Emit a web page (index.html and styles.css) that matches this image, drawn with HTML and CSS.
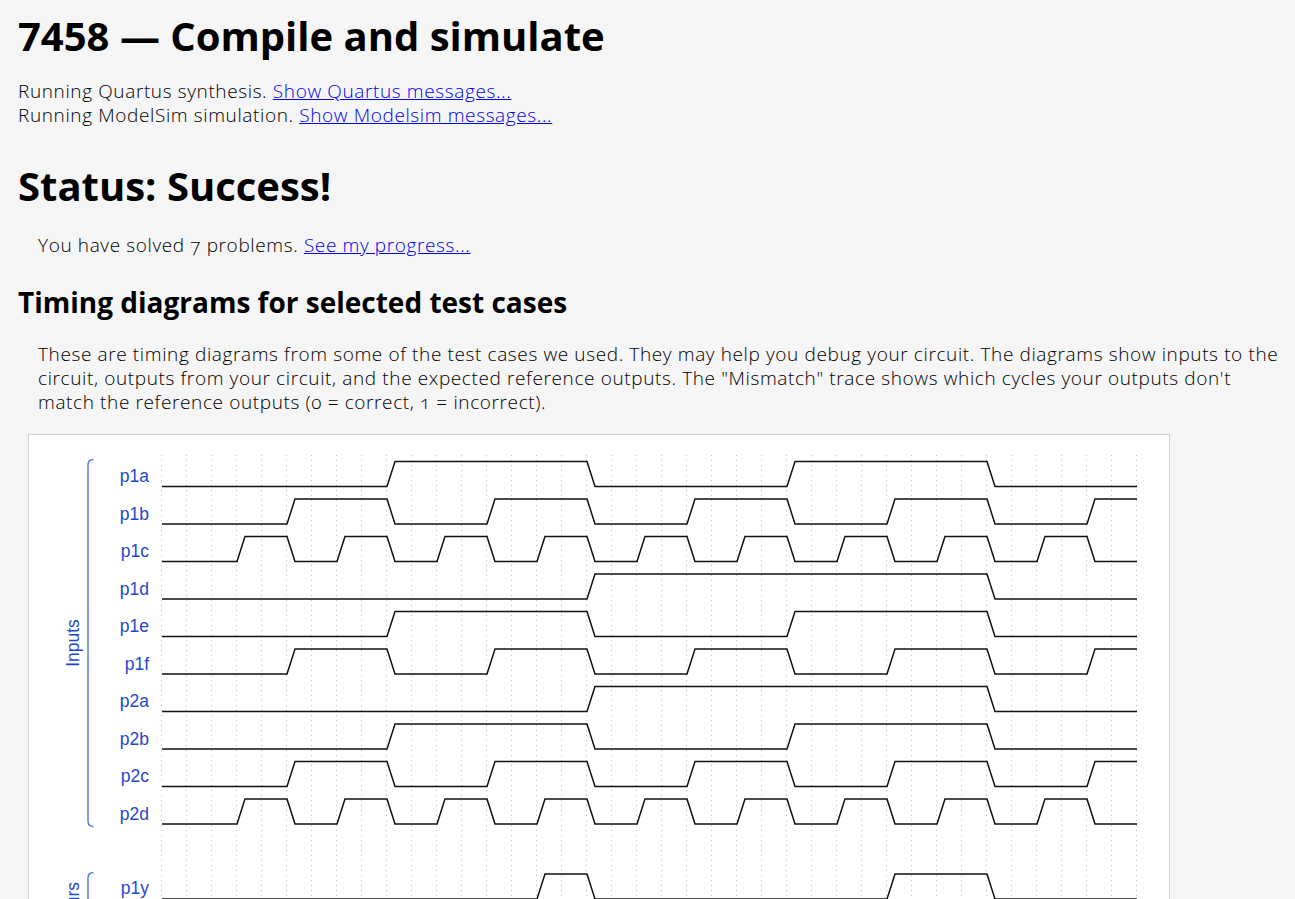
FILE: index.html
```html
<!DOCTYPE html>
<html lang="en">
<head>
<meta charset="utf-8">
<title>7458 — Compile and simulate</title>
<link rel="stylesheet" href="styles.css">
</head>
<body>
<h1 class="title">7458 — Compile and simulate</h1>
<p class="log">Running Quartus synthesis. <a href="#">Show Quartus messages...</a><br>Running ModelSim simulation. <a href="#">Show Modelsim messages...</a></p>
<h1 class="status">Status: Success!</h1>
<p class="indent solved">You have solved 7 problems. <a href="#">See my progress...</a></p>
<h2 class="section">Timing diagrams for selected test cases</h2>
<p class="indent explain">These are timing diagrams from some of the test cases we used. They may help you debug your circuit. The diagrams show inputs to the circuit, outputs from your circuit, and the expected reference outputs. The "Mismatch" trace shows which cycles your outputs don't match the reference outputs (0 = correct, 1 = incorrect).</p>
<div class="diagram">
<svg class="wave" width="1140" height="500" viewBox="29 436 1140 500" xmlns="http://www.w3.org/2000/svg">
  <defs>
    <pattern id="dots" x="161" y="456" width="25" height="5" patternUnits="userSpaceOnUse">
      <rect x="0" y="0" width="1" height="1" fill="#bdbdbd"/>
    </pattern>
    <path id="pa" d="M162 0H387L395 -25H587L595 0H787L795 -25H987L995 0H1137"/>
    <path id="pb" d="M162 0H287L295 -25H387L395 0H487L495 -25H587L595 0H687L695 -25H787L795 0H887L895 -25H987L995 0H1087L1095 -25H1137"/>
    <path id="pc" d="M162 0H237L245 -25H287L295 0H337L345 -25H387L395 0H437L445 -25H487L495 0H537L545 -25H587L595 0H637L645 -25H687L695 0H737L745 -25H787L795 0H837L845 -25H887L895 0H937L945 -25H987L995 0H1037L1045 -25H1087L1095 0H1137"/>
    <path id="pd" d="M162 0H587L595 -25H987L995 0H1137"/>
    <path id="py1" d="M162 0H537L545 -25H587L595 0H887L895 -25H987L995 0H1137"/>
  </defs>
  <rect x="161" y="456" width="977" height="480" fill="url(#dots)"/>

  <g class="bracket">
    <path d="M93.5 460.5Q88 460.5 88 466V822Q88 827.5 93.5 827.5"/>
    <path d="M93.5 873.5Q88 873.5 88 879V922Q88 927.5 93.5 927.5"/>
  </g>
  <g class="group">
    <text transform="translate(79 644) rotate(-90)">Inputs</text>
    <text transform="translate(79 905) rotate(-90)">Yours</text>
  </g>

  <g class="label">
    <text x="149" y="483">p1a</text>
    <text x="149" y="520.5">p1b</text>
    <text x="149" y="558">p1c</text>
    <text x="149" y="595.5">p1d</text>
    <text x="149" y="633">p1e</text>
    <text x="149" y="670.5">p1f</text>
    <text x="149" y="708">p2a</text>
    <text x="149" y="745.5">p2b</text>
    <text x="149" y="783">p2c</text>
    <text x="149" y="820.5">p2d</text>
    <text x="149" y="894.5">p1y</text>
  </g>

  <g class="trace">
    <use href="#pa" y="487.5"/>
    <use href="#pb" y="525"/>
    <use href="#pc" y="562.5"/>
    <use href="#pd" y="600"/>
    <use href="#pa" y="637.5"/>
    <use href="#pb" y="675"/>
    <use href="#pd" y="712.5"/>
    <use href="#pa" y="750"/>
    <use href="#pb" y="787.5"/>
    <use href="#pc" y="825"/>
    <use href="#py1" y="900"/>
  </g>
</svg>
</div>
</body>
</html>
```
FILE: styles.css
```css
html {
  background: #f5f5f5;
}

body {
  margin: 0;
  padding: 0 16px 0 18px;
  background: #f5f5f5;
  color: #000;
  font-family: "Open Sans", "Noto Sans", sans-serif;
  font-weight: 300;
  font-size: 19px;
  line-height: 24px;
  letter-spacing: 0.62px;
  font-variant-numeric: oldstyle-nums;
}

a {
  color: #0000ee;
  text-decoration: underline;
}

h1 {
  font-family: "Open Sans", "Noto Sans", sans-serif;
  font-weight: 700;
  font-size: 40px;
  line-height: 48px;
  letter-spacing: 0;
  font-variant-numeric: normal;
  color: #000;
}

.title {
  margin: 12px 0 19px;
}

.log {
  margin: 0;
}

.status {
  margin: 35px 0 23px;
}

.indent {
  margin-left: 20px;
  margin-right: 0;
}

.solved {
  margin-top: 0;
  margin-bottom: 28px;
}

.section {
  font-family: "Open Sans", "Noto Sans", sans-serif;
  font-weight: 700;
  font-size: 28px;
  line-height: 34px;
  letter-spacing: 0;
  color: #000;
  margin: 0 0 23px;
}

.explain {
  margin-top: 0;
  margin-bottom: 20px;
}

.diagram {
  margin-left: 10px;
  width: 1140px;
  border: 1px solid #d2d2d2;
  background: #fff;
}

.wave {
  display: block;
  letter-spacing: 0;
}

.trace use {
  fill: none;
  stroke: #111;
  stroke-width: 1.5;
}

.label text {
  font-family: "Liberation Sans", Arial, sans-serif;
  font-weight: 400;
  font-size: 17.5px;
  fill: #1f48cc;
  text-anchor: end;
}

.group text {
  font-family: "Liberation Sans", Arial, sans-serif;
  font-weight: 400;
  font-size: 17.5px;
  fill: #1f48cc;
  text-anchor: middle;
}

.bracket path {
  fill: none;
  stroke: #5a7fe2;
  stroke-width: 1.5;
}
```
